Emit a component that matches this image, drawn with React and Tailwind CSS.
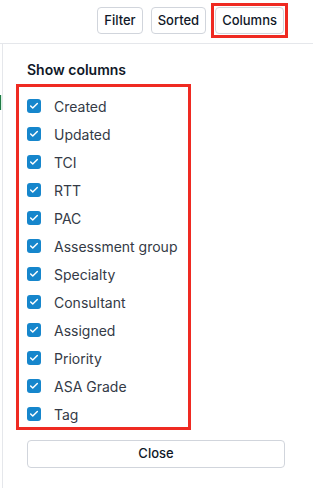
import { Check } from "lucide-react";

const columns = [
  "Created",
  "Updated",
  "TCI",
  "RTT",
  "PAC",
  "Assessment group",
  "Specialty",
  "Consultant",
  "Assigned",
  "Priority",
  "ASA Grade",
  "Tag",
];

const ToolbarButton = ({ label }) => (
  <button className="h-[27px] px-[6px] rounded-[4px] border border-gray-300 bg-white text-[13px] font-medium text-gray-900 leading-none">
    {label}
  </button>
);

const ColumnRow = ({ label }) => (
  <label className="h-[24px] flex items-center gap-[13px] cursor-pointer">
    <span className="w-[14px] h-[14px] rounded-[3px] bg-[#1686cc] flex items-center justify-center">
      <Check size={10} strokeWidth={3.5} className="text-white" />
    </span>
    <span className="text-[14px] text-[#343a46]">{label}</span>
  </label>
);

const App = () => {
  return (
    <div className="w-[313px] h-[488px] bg-white flex flex-col overflow-hidden font-['Inter',sans-serif]">
      {/* top toolbar */}
      <div className="h-[44px] shrink-0 border-b border-gray-200 flex items-start justify-end pt-[3px] pr-[25px]">
        <div className="flex items-start gap-2">
          <div className="mt-[4px] flex gap-2">
            <ToolbarButton label="Filter" />
            <ToolbarButton label="Sorted" />
          </div>
          {/* highlight annotation */}
          <div className="-ml-[3px] border-[3px] border-[#ef2a22] p-px">
            <ToolbarButton label="Columns" />
          </div>
        </div>
      </div>

      <div className="flex-1 flex">
        {/* sliver of the table behind */}
        <div className="w-[2px] shrink-0 flex flex-col">
          <div className="h-[51px]" />
          <div className="h-[15px] bg-[#d9f5e3] border-l border-[#1f7a45]" />
        </div>

        {/* slide-over panel */}
        <div className="flex-1 border-l border-gray-200 pl-[24px] pr-[28px] flex flex-col">
          <h2 className="mt-[16px] text-[14px] font-semibold text-gray-900 leading-[20px]">
            Show columns
          </h2>

          <div className="mt-[4px] -ml-[11px] w-[175px] border-[3px] border-[#ef2a22] pl-[8px] pt-[7px] pb-px flex flex-col gap-[4px]">
            {columns.map((c) => (
              <ColumnRow key={c} label={c} />
            ))}
          </div>

          <button className="mt-[10px] h-[28px] w-full rounded-[4px] border border-gray-300 bg-white text-[13px] font-medium text-gray-900">
            Close
          </button>
        </div>
      </div>
    </div>
  );
};

export default App;
